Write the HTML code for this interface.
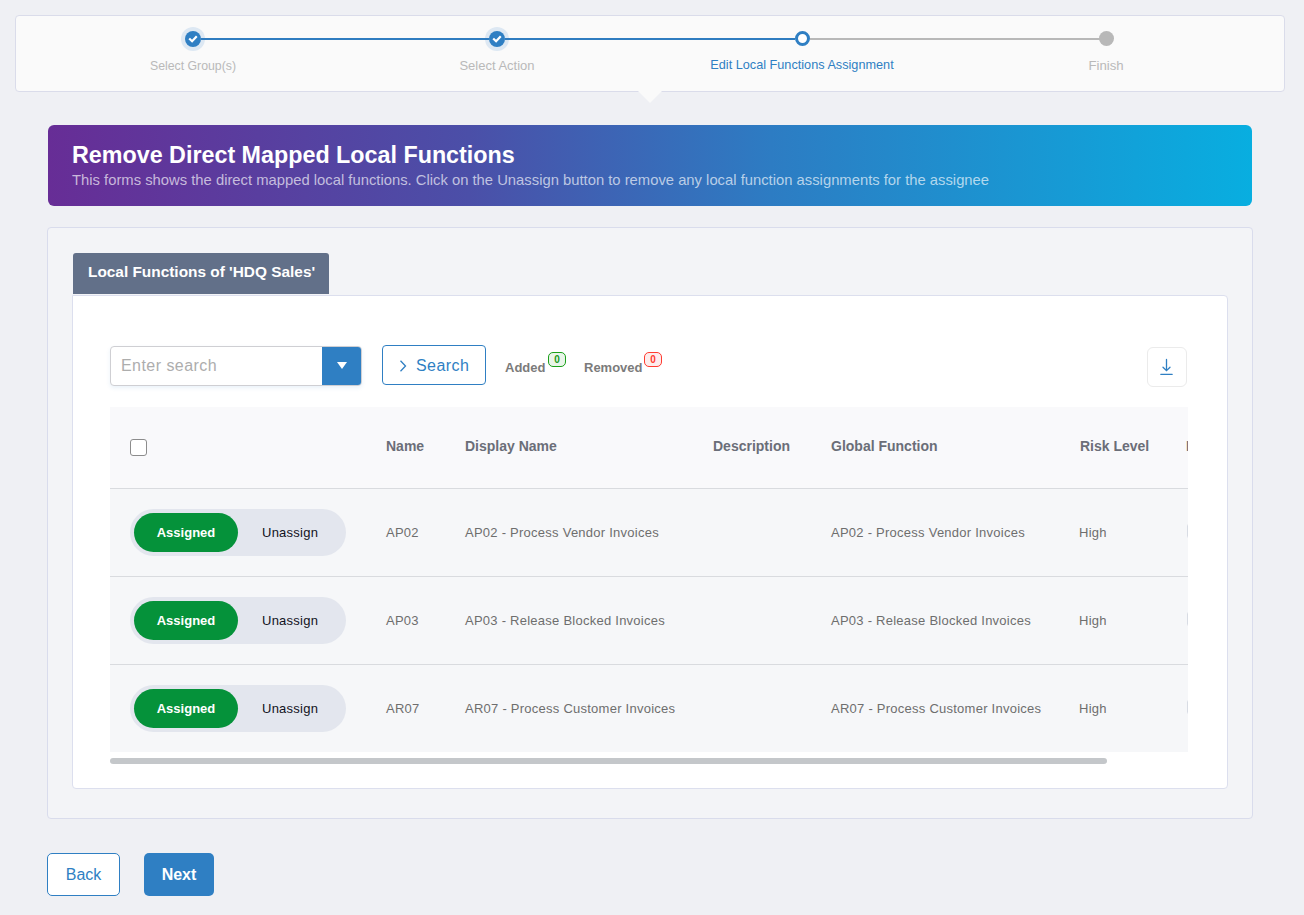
<!DOCTYPE html>
<html><head><meta charset="utf-8">
<style>
*{box-sizing:border-box;margin:0;padding:0}
html,body{width:1304px;height:915px;overflow:hidden;background:#eff0f4;font-family:"Liberation Sans",sans-serif;position:relative}
.abs{position:absolute}
/* stepper */
#stepper{left:15px;top:15px;width:1270px;height:77px;background:#fafafa;border:1px solid #dadcea;border-radius:4px}
#notch{left:638px;top:91px;width:0;height:0;border-left:12px solid transparent;border-right:12px solid transparent;border-top:12px solid #fafafa}
.line{height:2px;top:38px}
.halo{width:24px;height:24px;border-radius:50%;background:#dde8f3}
.dot{width:16px;height:16px;border-radius:50%;background:#2f7fc3}
.slabel{top:58px;font-size:12.8px;color:#b9b9b9;white-space:nowrap;text-align:center;width:300px}
/* banner */
#banner{left:48px;top:125px;width:1204px;height:81px;border-radius:6px;background:linear-gradient(90deg,#672d96 0%,#4b4fa8 35%,#2d7cc3 60%,#08aee0 100%)}
#btitle{left:72px;top:142px;font-size:23.3px;font-weight:bold;color:#fff;white-space:nowrap}
#bsub{left:72px;top:172px;font-size:14.8px;color:rgba(255,255,255,0.66);white-space:nowrap}
/* panel */
#panel{left:47px;top:227px;width:1206px;height:592px;background:#f3f4f7;border:1px solid #d9dcec;border-radius:4px}
#card{left:72px;top:295px;width:1156px;height:494px;background:#fff;border:1px solid #dcdfee;border-radius:0 4px 4px 4px}
#tab{left:73px;top:253px;width:256px;height:41px;background:#627089;border-radius:3px 3px 0 0;color:#fff;font-weight:bold;font-size:15.4px;padding:10px 0 0 15px;white-space:nowrap}
#search{left:110px;top:346px;width:252px;height:40px;border:1px solid #cfcfd3;border-radius:4px;background:#fff;box-shadow:0 2px 4px rgba(47,127,195,0.10)}
#sdrop{left:322px;top:347px;width:39px;height:38px;background:#2f7fc3;border-radius:0 3px 3px 0}
#placeholder{left:121px;top:357px;font-size:16px;letter-spacing:0.45px;color:#adadad;white-space:nowrap}
#sbtn{left:382px;top:345px;width:104px;height:40px;border:1px solid #2f7fc3;border-radius:4px;background:#fff}
#sbtntext{left:416px;top:357px;font-size:16px;letter-spacing:0.45px;color:#2f7fc3}
.lbl{font-size:13px;font-weight:bold;color:#7b7b7b;top:360px;white-space:nowrap}
.badge{height:15px;width:18px;border-radius:5px;font-size:10px;font-weight:bold;text-align:center;line-height:13px}
#dl{left:1147px;top:347px;width:40px;height:40px;border:1px solid #ebebeb;border-radius:6px;background:#fff}
/* table */
#tbl{left:110px;top:407px;width:1078px;height:345px;overflow:hidden;background:#f6f7f9}
#thead{left:0;top:0;width:1078px;height:81px;background:#f9f9fb}
.rowline{left:0;width:1078px;height:1px;background:#d9dbdf}
.th{top:31px;font-size:14px;font-weight:bold;color:#6b6e78;white-space:nowrap}
.td{font-size:13px;color:#6e6e6e;white-space:nowrap;letter-spacing:0.25px}
.toggle{left:20px;width:216px;height:47px;border-radius:24px;background:#e3e6ee}
.ass{left:4px;top:4px;width:104px;height:39px;border-radius:20px;background:#05923a;color:#fff;font-size:13px;font-weight:bold;text-align:center;line-height:39px}
.una{left:132px;top:0;font-size:13px;letter-spacing:0.25px;color:#121222;line-height:47px}
#scroll{left:110px;top:758px;width:997px;height:6px;border-radius:3px;background:#c4c7ca}
/* footer */
#back{left:47px;top:853px;width:73px;height:43px;border:1px solid #2f7fc3;border-radius:5px;background:#fff;color:#2f7fc3;font-size:16px;text-align:center;line-height:41px}
#next{left:144px;top:853px;width:70px;height:43px;border-radius:5px;background:#2f7fc3;color:#fff;font-size:16px;font-weight:bold;text-align:center;line-height:43px}
</style></head>
<body>
<div id="stepper" class="abs"></div>
<div id="notch" class="abs"></div>
<div class="abs halo" style="left:181px;top:27px"></div>
<div class="abs dot" style="left:185px;top:31px"></div>
<svg class="abs" style="left:185px;top:31px" width="16" height="16" viewBox="0 0 16 16"><path d="M5 8.2 L7.1 10.2 L11 6.1" stroke="#fff" stroke-width="2.2" fill="none" stroke-linecap="square"/></svg>
<div class="abs halo" style="left:485px;top:27px"></div>
<div class="abs dot" style="left:489px;top:31px"></div>
<svg class="abs" style="left:489px;top:31px" width="16" height="16" viewBox="0 0 16 16"><path d="M5 8.2 L7.1 10.2 L11 6.1" stroke="#fff" stroke-width="2.2" fill="none" stroke-linecap="square"/></svg>
<div class="abs" style="left:795px;top:31px;width:15px;height:15px;border-radius:50%;border:3px solid #2f7fc3;background:#fff"></div>
<div class="abs" style="left:1099px;top:31px;width:15px;height:15px;border-radius:50%;background:#b8b8b8"></div>
<div class="abs line" style="left:201px;width:288px;background:#2f7cc0"></div>
<div class="abs line" style="left:505px;width:290px;background:#2f7cc0"></div>
<div class="abs line" style="left:810px;width:290px;background:#b8b8b8"></div>
<div class="abs slabel" style="left:43px;font-size:12.3px;top:59px">Select Group(s)</div>
<div class="abs slabel" style="left:347px;font-size:13px">Select Action</div>
<div class="abs slabel" style="left:652px;color:#2f7fc3;font-size:12.7px;top:58px">Edit Local Functions Assignment</div>
<div class="abs slabel" style="left:956px;font-size:13.2px">Finish</div>

<div id="banner" class="abs"></div>
<div id="btitle" class="abs">Remove Direct Mapped Local Functions</div>
<div id="bsub" class="abs">This forms shows the direct mapped local functions. Click on the Unassign button to remove any local function assignments for the assignee</div>

<div id="panel" class="abs"></div>
<div id="card" class="abs"></div>
<div id="tab" class="abs">Local Functions of 'HDQ Sales'</div>

<div id="search" class="abs"></div>
<div id="sdrop" class="abs"></div>
<svg class="abs" style="left:337px;top:362px" width="10" height="7" viewBox="0 0 10 7"><path d="M0 0 H10 L5 7 Z" fill="#fff"/></svg>
<div id="placeholder" class="abs">Enter search</div>
<div id="sbtn" class="abs"></div>
<svg class="abs" style="left:399px;top:360px" width="8" height="12" viewBox="0 0 8 12"><path d="M1.5 0.8 L6.5 6 L1.5 11.2" stroke="#2f7fc3" stroke-width="1.3" fill="none"/></svg>
<div id="sbtntext" class="abs">Search</div>
<div class="abs lbl" style="left:505px">Added</div>
<div class="abs badge" style="left:548px;top:352px;border:1.5px solid #1aa01a;background:#e9f5e9;color:#1a9a1a">0</div>
<div class="abs lbl" style="left:584px">Removed</div>
<div class="abs badge" style="left:644px;top:352px;border:1.5px solid #ff3b30;background:#fdecec;color:#ff3b30">0</div>
<div id="dl" class="abs"></div>
<svg class="abs" style="left:1157px;top:357px" width="20" height="20" viewBox="0 0 20 20"><path d="M9.5 2.5 V13.5 M6 10.2 L9.5 13.7 L13 10.2 M3.8 17.3 H15.2" stroke="#2f7fc3" stroke-width="1.3" fill="none" stroke-linecap="round"/></svg>

<div id="tbl" class="abs">
  <div id="thead" class="abs"></div>
  <div class="abs" style="left:20px;top:32px;width:17px;height:17px;border:1.5px solid #8c8c8c;border-radius:3px;background:#fff"></div>
  <div class="abs th" style="left:276px">Name</div>
  <div class="abs th" style="left:355px">Display Name</div>
  <div class="abs th" style="left:603px">Description</div>
  <div class="abs th" style="left:721px">Global Function</div>
  <div class="abs th" style="left:970px">Risk Level</div>
  <div class="abs th" style="left:1076px">L</div>

  <div class="abs rowline" style="top:81px"></div>
  <div class="abs toggle" style="top:102px"><div class="abs ass">Assigned</div><div class="abs una">Unassign</div></div>
  <div class="abs td" style="left:276px;top:118px">AP02</div>
  <div class="abs td" style="left:355px;top:118px">AP02 - Process Vendor Invoices</div>
  <div class="abs td" style="left:721px;top:118px">AP02 - Process Vendor Invoices</div>
  <div class="abs td" style="left:969px;top:118px">High</div>
  <div class="abs" style="left:1077px;top:117px;width:3px;height:14px;border:1px solid #d8dce4;border-radius:2px;background:#fff"></div>

  <div class="abs rowline" style="top:169px"></div>
  <div class="abs toggle" style="top:190px"><div class="abs ass">Assigned</div><div class="abs una">Unassign</div></div>
  <div class="abs td" style="left:276px;top:206px">AP03</div>
  <div class="abs td" style="left:355px;top:206px">AP03 - Release Blocked Invoices</div>
  <div class="abs td" style="left:721px;top:206px">AP03 - Release Blocked Invoices</div>
  <div class="abs td" style="left:969px;top:206px">High</div>
  <div class="abs" style="left:1077px;top:205px;width:3px;height:14px;border:1px solid #d8dce4;border-radius:2px;background:#fff"></div>

  <div class="abs rowline" style="top:257px"></div>
  <div class="abs toggle" style="top:278px"><div class="abs ass">Assigned</div><div class="abs una">Unassign</div></div>
  <div class="abs td" style="left:276px;top:294px">AR07</div>
  <div class="abs td" style="left:355px;top:294px">AR07 - Process Customer Invoices</div>
  <div class="abs td" style="left:721px;top:294px">AR07 - Process Customer Invoices</div>
  <div class="abs td" style="left:969px;top:294px">High</div>
  <div class="abs" style="left:1077px;top:293px;width:3px;height:14px;border:1px solid #d8dce4;border-radius:2px;background:#fff"></div>
</div>
<div id="scroll" class="abs"></div>

<div id="back" class="abs">Back</div>
<div id="next" class="abs">Next</div>
</body></html>
